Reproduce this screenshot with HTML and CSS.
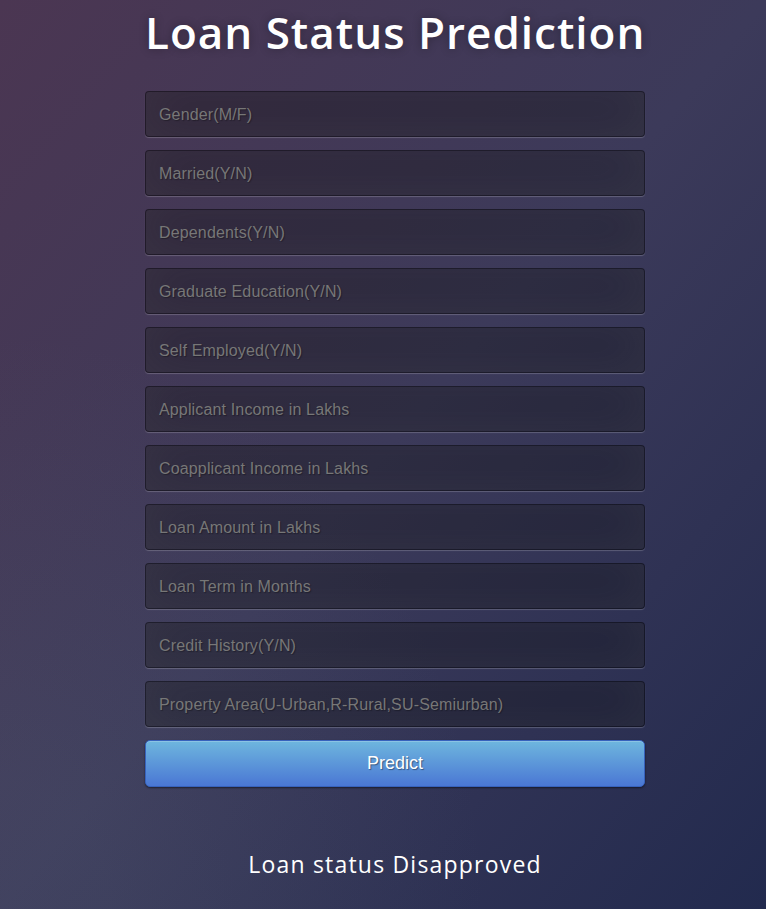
FILE: index.html
```html
<!DOCTYPE html>
<html lang="en">
<head>
<meta charset="UTF-8">
<title>Loan Status Prediction</title>
<link rel="stylesheet" href="styles.css">
</head>
<body>
<div class="login">
  <h1 class="title">Loan Status Prediction</h1>
  <form class="form">
    <input type="text" placeholder="Gender(M/F)">
    <input type="text" placeholder="Married(Y/N)">
    <input type="text" placeholder="Dependents(Y/N)">
    <input type="text" placeholder="Graduate Education(Y/N)">
    <input type="text" placeholder="Self Employed(Y/N)">
    <input type="text" placeholder="Applicant Income in Lakhs">
    <input type="text" placeholder="Coapplicant Income in Lakhs">
    <input type="text" placeholder="Loan Amount in Lakhs">
    <input type="text" placeholder="Loan Term in Months">
    <input type="text" placeholder="Credit History(Y/N)">
    <input type="text" placeholder="Property Area(U-Urban,R-Rural,SU-Semiurban)">
    <button type="button" class="btn">Predict</button>
  </form>
  <p class="result">Loan status Disapproved</p>
</div>
</body>
</html>
```

FILE: styles.css
```css
* { box-sizing: border-box; }

html, body {
  margin: 0;
  width: 100%;
  height: 100%;
  overflow: hidden;
}

body {
  font-family: "Open Sans", sans-serif;
  color: #fff;
  font-size: 18px;
  letter-spacing: 1.2px;
  text-align: center;
  background:
    radial-gradient(ellipse farthest-corner at 0% 100%, rgba(104,128,138,.12) 10%, rgba(104,128,138,0) 45%),
    linear-gradient(to bottom right, #4b3652 0%, #3c3a5a 50%, #222a4e 100%);
  background-color: #333556;
  display: flex;
  justify-content: center;
  padding-left: 24px;
}

.login {
  width: 500px;
  display: flex;
  flex-direction: column;
}

.title {
  margin: 0;
  padding-top: 1px;
  font-size: 44px;
  font-weight: 600;
  line-height: 62px;
  letter-spacing: 1px;
  white-space: nowrap;
  text-shadow: 0 0 10px rgba(0,0,0,0.3);
}

.form {
  margin-top: 28px;
  display: flex;
  flex-direction: column;
  gap: 13px;
}

input {
  width: 100%;
  height: 46px;
  margin: 0;
  padding: 2px 13px 0;
  font-family: "Liberation Sans", Arial, sans-serif;
  font-size: 16px;
  letter-spacing: 0.15px;
  color: #fff;
  background: rgba(0,0,0,0.3);
  border: 1px solid rgba(0,0,0,0.3);
  border-radius: 4px;
  outline: none;
  text-shadow: 1px 1px 1px rgba(0,0,0,0.3);
  box-shadow: inset 0 -5px 45px rgba(100,100,100,0.2), 0 1px 1px rgba(255,255,255,0.2);
}

input::placeholder {
  color: #777777;
}

.btn {
  width: 100%;
  height: 47px;
  margin: 0;
  padding: 0 14px;
  font-family: "Liberation Sans", Arial, sans-serif;
  font-size: 18px;
  letter-spacing: 0;
  color: #fff;
  background-color: #4a77d4;
  background-image: linear-gradient(to bottom, #6eb6de, #4a77d4);
  border: 1px solid #3762bc;
  border-radius: 5px;
  text-shadow: 1px 1px 1px rgba(0,0,0,0.4);
  box-shadow: inset 0 1px 0 rgba(255,255,255,0.2), 0 1px 2px rgba(0,0,0,0.5);
  cursor: pointer;
}

.result {
  margin: 52px 0 0;
  font-size: 23px;
  line-height: 50px;
}
```
